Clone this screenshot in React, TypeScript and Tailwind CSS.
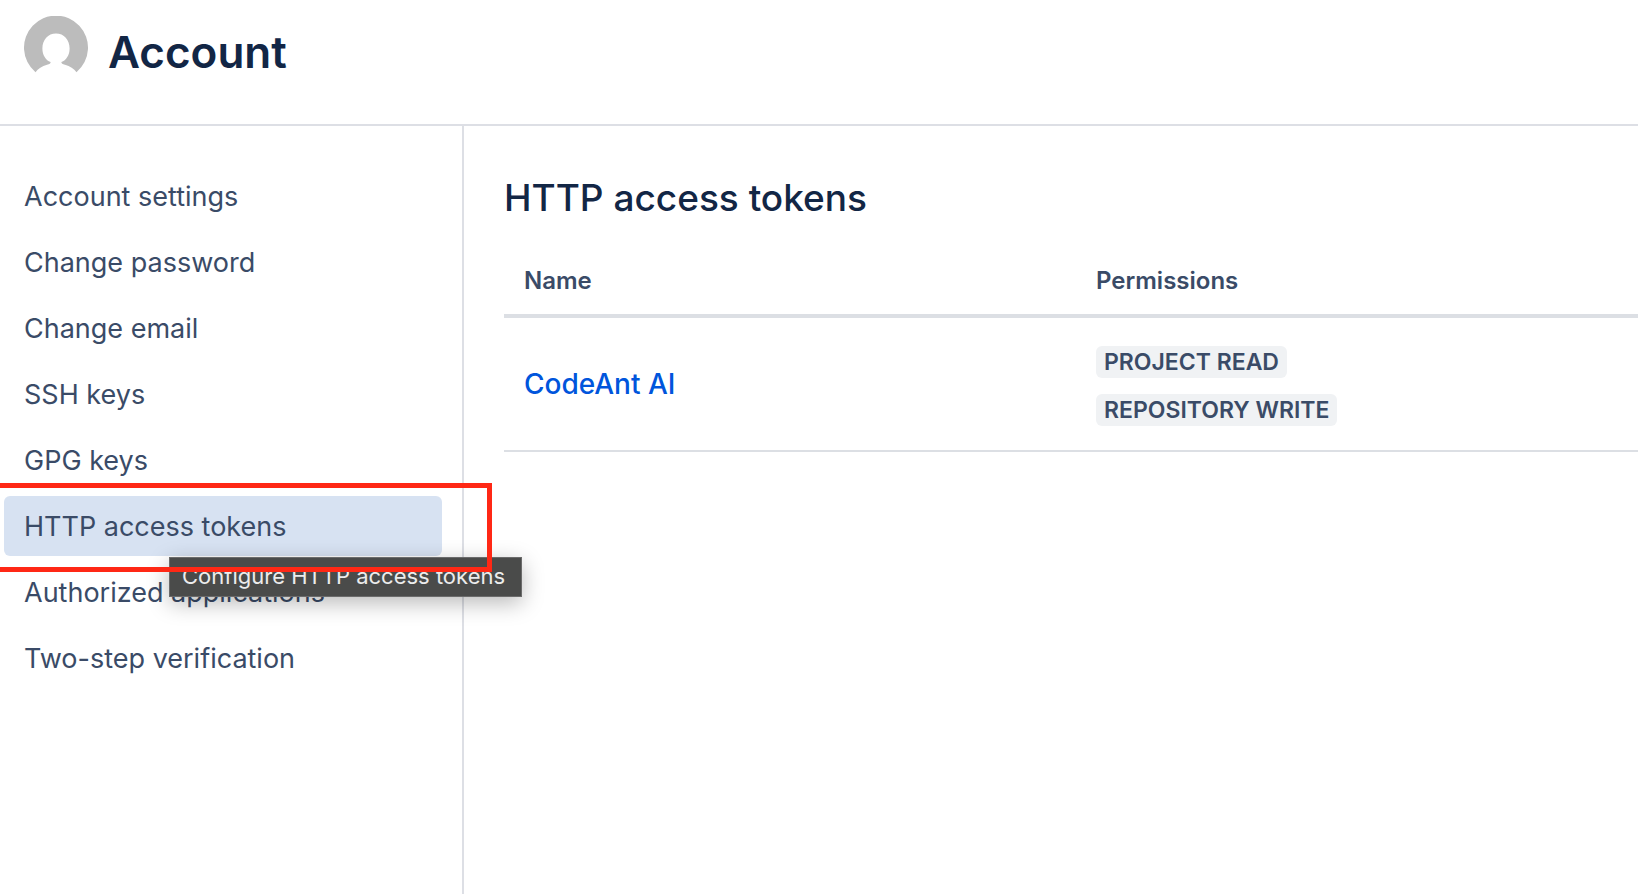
const navItems = [
  { label: "Account settings", href: "#account" },
  { label: "Change password", href: "#password" },
  { label: "Change email", href: "#email" },
  { label: "SSH keys", href: "#ssh" },
  { label: "GPG keys", href: "#gpg" },
  { label: "HTTP access tokens", href: "#tokens", tooltip: "Configure HTTP access tokens" },
  { label: "Authorized applications", href: "#applications" },
  { label: "Two-step verification", href: "#two-step" },
];

const tokens = [{ name: "CodeAnt AI", permissions: ["Project read", "Repository write"] }];

function Avatar() {
  return (
    <svg className="size-16 shrink-0" viewBox="0 0 64 64" aria-hidden="true">
      <path
        d="M11.5 56.2A32 32 0 1 1 52.5 56.2C50 52.6 46 50.2 41 48.8C38.3 48 37.3 47 37.4 46C42.2 44.2 45.6 39 45.6 32.4C45.6 23.6 40 17.4 32 17.4S18.4 23.6 18.4 32.4C18.4 39 21.8 44.2 26.6 46C26.7 47 25.7 48 23 48.8C18 50.2 14 52.6 11.5 56.2Z"
        fill="#bcbcbc"
      />
    </svg>
  );
}

function SideNav() {
  return (
    <nav
      aria-label="Account"
      className="w-[464px] shrink-0 border-r-2 border-[#dddfe5] pt-10 pr-5 pl-1 text-[27px]"
    >
      <ul className="flex flex-col gap-1.5">
        {navItems.map((item) => (
          <li key={item.label} className={item.tooltip ? "relative z-10" : ""}>
            <a
              href={item.href}
              aria-current={item.tooltip ? "page" : undefined}
              className={
                item.tooltip
                  ? "flex h-15 items-center rounded-md bg-[#d7e2f2] px-5 pt-0.5"
                  : "flex h-15 items-center rounded-md px-5 pt-0.5"
              }
            >
              {item.label}
            </a>
            {item.tooltip && (
              <>
                <span
                  role="tooltip"
                  className="absolute top-[61px] left-[165px] flex h-10 items-center border border-[#6b6b6b] bg-[#4a4b4a] pr-4 pb-0.5 pl-3 text-[22px] leading-8 whitespace-nowrap text-[#ececec] shadow-[0_6px_22px_rgba(0,0,0,0.28)]"
                >
                  {item.tooltip}
                </span>
                <span className="pointer-events-none absolute -top-[13px] -left-1 h-[89px] w-[492px] border-5 border-l-0 border-[#ff2815]" />
              </>
            )}
          </li>
        ))}
      </ul>
    </nav>
  );
}

function TokenTable() {
  return (
    <table className="w-full table-fixed border-collapse text-left">
      <thead>
        <tr className="border-b-4 border-[#dcdfe4] text-2xl">
          <th scope="col" className="w-[572px] px-5 pt-[11px] pb-[17px] font-semibold">
            Name
          </th>
          <th scope="col" className="px-5 pt-[11px] pb-[17px] font-semibold">
            Permissions
          </th>
        </tr>
      </thead>
      <tbody>
        {tokens.map((token) => (
          <tr key={token.name} className="border-b-2 border-[#dcdfe4]">
            <td className="px-5">
              <a href="#token" className="font-medium text-[#0055dc]">
                {token.name}
              </a>
            </td>
            <td className="px-5 pt-7 pb-6">
              <ul className="flex flex-col items-start gap-4">
                {token.permissions.map((permission) => (
                  <li
                    key={permission}
                    className="flex h-8 items-center rounded-md bg-[#f0f2f4] px-2 text-[23px] font-semibold uppercase"
                  >
                    {permission}
                  </li>
                ))}
              </ul>
            </td>
          </tr>
        ))}
      </tbody>
    </table>
  );
}

export default function App() {
  return (
    <div className="flex min-h-screen flex-col overflow-x-hidden bg-white font-['Inter',sans-serif] text-[28px] leading-10 text-[#3a4b67]">
      <header className="flex h-[126px] items-start gap-5 border-b-2 border-[#dddfe5] px-6 pt-4">
        <Avatar />
        <h1 className="pt-1 text-[44px] leading-16 font-semibold text-[#122645]">Account</h1>
      </header>
      <div className="flex flex-1">
        <SideNav />
        <main className="min-w-0 flex-1 pt-12 pl-10">
          <h2 className="mb-8 text-[37px] leading-12 font-medium text-[#122645]">HTTP access tokens</h2>
          <TokenTable />
        </main>
      </div>
    </div>
  );
}
